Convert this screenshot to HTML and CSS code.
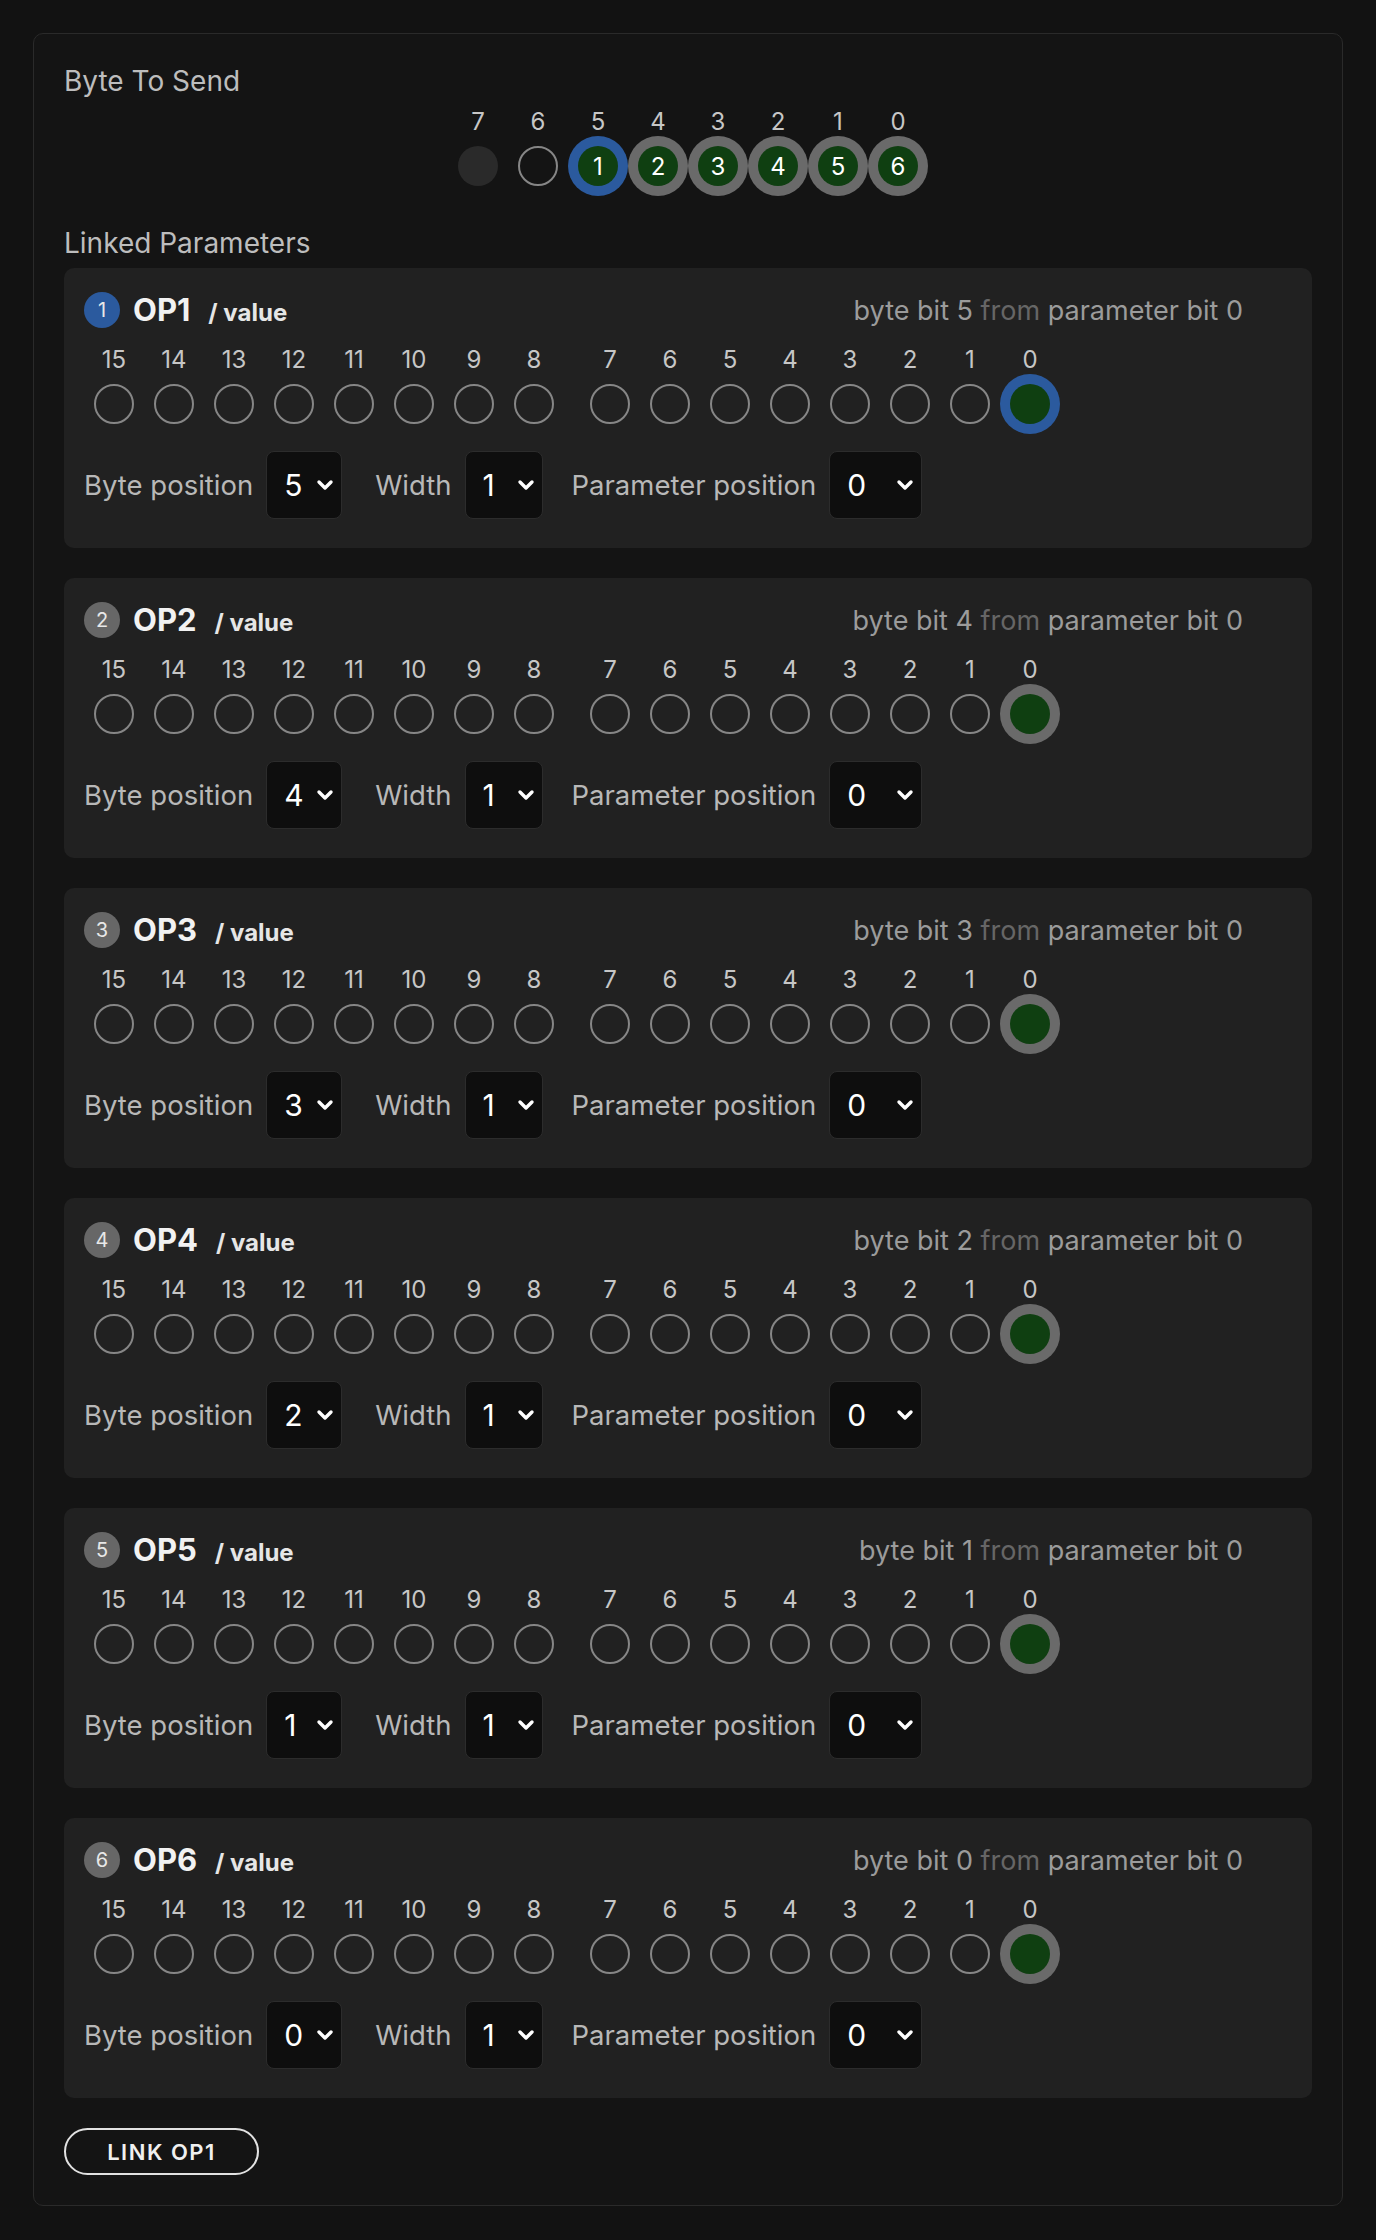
FILE: index.html
```html
<!DOCTYPE html>
<html lang="en">
<head>
<meta charset="utf-8">
<title>Byte To Send</title>
<link rel="stylesheet" href="styles.css">
</head>
<body>
<div class="page">
  <div class="card">
    <div class="heading">Byte To Send</div>
    <div class="byte-row">
      <div class="bit"><div class="bit-label">7</div><div class="dot off"></div></div>
      <div class="bit"><div class="bit-label">6</div><div class="dot"></div></div>
      <div class="bit"><div class="bit-label">5</div><div class="dot on sel">1</div></div>
      <div class="bit"><div class="bit-label">4</div><div class="dot on">2</div></div>
      <div class="bit"><div class="bit-label">3</div><div class="dot on">3</div></div>
      <div class="bit"><div class="bit-label">2</div><div class="dot on">4</div></div>
      <div class="bit"><div class="bit-label">1</div><div class="dot on">5</div></div>
      <div class="bit"><div class="bit-label">0</div><div class="dot on">6</div></div>
    </div>

    <div class="heading heading-linked">Linked Parameters</div>

    <div class="panels">

      <!-- OP1 -->
      <div class="panel">
        <div class="panel-head">
          <span class="badge badge-sel">1</span>
          <span class="title"><span class="op">OP1</span><span class="sub">/ value</span></span>
          <span class="mapping">byte bit 5 <span class="from">from</span> parameter bit 0</span>
        </div>
        <div class="bits">
          <div class="group">
            <div class="bit"><div class="bit-label">15</div><div class="dot"></div></div>
            <div class="bit"><div class="bit-label">14</div><div class="dot"></div></div>
            <div class="bit"><div class="bit-label">13</div><div class="dot"></div></div>
            <div class="bit"><div class="bit-label">12</div><div class="dot"></div></div>
            <div class="bit"><div class="bit-label">11</div><div class="dot"></div></div>
            <div class="bit"><div class="bit-label">10</div><div class="dot"></div></div>
            <div class="bit"><div class="bit-label">9</div><div class="dot"></div></div>
            <div class="bit"><div class="bit-label">8</div><div class="dot"></div></div>
          </div>
          <div class="group">
            <div class="bit"><div class="bit-label">7</div><div class="dot"></div></div>
            <div class="bit"><div class="bit-label">6</div><div class="dot"></div></div>
            <div class="bit"><div class="bit-label">5</div><div class="dot"></div></div>
            <div class="bit"><div class="bit-label">4</div><div class="dot"></div></div>
            <div class="bit"><div class="bit-label">3</div><div class="dot"></div></div>
            <div class="bit"><div class="bit-label">2</div><div class="dot"></div></div>
            <div class="bit"><div class="bit-label">1</div><div class="dot"></div></div>
            <div class="bit"><div class="bit-label">0</div><div class="dot on sel"></div></div>
          </div>
        </div>
        <div class="controls">
          <span class="ctl-label">Byte position</span>
          <div class="select sel-byte"><span class="val">5</span><svg class="chev" width="18" height="12" viewBox="0 0 18 12"><path d="M3 3 L9 9 L15 3" fill="none" stroke="#fff" stroke-width="3.4" stroke-linecap="round" stroke-linejoin="round"/></svg></div>
          <span class="ctl-label">Width</span>
          <div class="select sel-width"><span class="val">1</span><svg class="chev" width="18" height="12" viewBox="0 0 18 12"><path d="M3 3 L9 9 L15 3" fill="none" stroke="#fff" stroke-width="3.4" stroke-linecap="round" stroke-linejoin="round"/></svg></div>
          <span class="ctl-label">Parameter position</span>
          <div class="select sel-param"><span class="val">0</span><svg class="chev" width="18" height="12" viewBox="0 0 18 12"><path d="M3 3 L9 9 L15 3" fill="none" stroke="#fff" stroke-width="3.4" stroke-linecap="round" stroke-linejoin="round"/></svg></div>
        </div>
      </div>

      <!-- OP2 -->
      <div class="panel">
        <div class="panel-head">
          <span class="badge">2</span>
          <span class="title"><span class="op">OP2</span><span class="sub">/ value</span></span>
          <span class="mapping">byte bit 4 <span class="from">from</span> parameter bit 0</span>
        </div>
        <div class="bits">
          <div class="group">
            <div class="bit"><div class="bit-label">15</div><div class="dot"></div></div>
            <div class="bit"><div class="bit-label">14</div><div class="dot"></div></div>
            <div class="bit"><div class="bit-label">13</div><div class="dot"></div></div>
            <div class="bit"><div class="bit-label">12</div><div class="dot"></div></div>
            <div class="bit"><div class="bit-label">11</div><div class="dot"></div></div>
            <div class="bit"><div class="bit-label">10</div><div class="dot"></div></div>
            <div class="bit"><div class="bit-label">9</div><div class="dot"></div></div>
            <div class="bit"><div class="bit-label">8</div><div class="dot"></div></div>
          </div>
          <div class="group">
            <div class="bit"><div class="bit-label">7</div><div class="dot"></div></div>
            <div class="bit"><div class="bit-label">6</div><div class="dot"></div></div>
            <div class="bit"><div class="bit-label">5</div><div class="dot"></div></div>
            <div class="bit"><div class="bit-label">4</div><div class="dot"></div></div>
            <div class="bit"><div class="bit-label">3</div><div class="dot"></div></div>
            <div class="bit"><div class="bit-label">2</div><div class="dot"></div></div>
            <div class="bit"><div class="bit-label">1</div><div class="dot"></div></div>
            <div class="bit"><div class="bit-label">0</div><div class="dot on"></div></div>
          </div>
        </div>
        <div class="controls">
          <span class="ctl-label">Byte position</span>
          <div class="select sel-byte"><span class="val">4</span><svg class="chev" width="18" height="12" viewBox="0 0 18 12"><path d="M3 3 L9 9 L15 3" fill="none" stroke="#fff" stroke-width="3.4" stroke-linecap="round" stroke-linejoin="round"/></svg></div>
          <span class="ctl-label">Width</span>
          <div class="select sel-width"><span class="val">1</span><svg class="chev" width="18" height="12" viewBox="0 0 18 12"><path d="M3 3 L9 9 L15 3" fill="none" stroke="#fff" stroke-width="3.4" stroke-linecap="round" stroke-linejoin="round"/></svg></div>
          <span class="ctl-label">Parameter position</span>
          <div class="select sel-param"><span class="val">0</span><svg class="chev" width="18" height="12" viewBox="0 0 18 12"><path d="M3 3 L9 9 L15 3" fill="none" stroke="#fff" stroke-width="3.4" stroke-linecap="round" stroke-linejoin="round"/></svg></div>
        </div>
      </div>

      <!-- OP3 -->
      <div class="panel">
        <div class="panel-head">
          <span class="badge">3</span>
          <span class="title"><span class="op">OP3</span><span class="sub">/ value</span></span>
          <span class="mapping">byte bit 3 <span class="from">from</span> parameter bit 0</span>
        </div>
        <div class="bits">
          <div class="group">
            <div class="bit"><div class="bit-label">15</div><div class="dot"></div></div>
            <div class="bit"><div class="bit-label">14</div><div class="dot"></div></div>
            <div class="bit"><div class="bit-label">13</div><div class="dot"></div></div>
            <div class="bit"><div class="bit-label">12</div><div class="dot"></div></div>
            <div class="bit"><div class="bit-label">11</div><div class="dot"></div></div>
            <div class="bit"><div class="bit-label">10</div><div class="dot"></div></div>
            <div class="bit"><div class="bit-label">9</div><div class="dot"></div></div>
            <div class="bit"><div class="bit-label">8</div><div class="dot"></div></div>
          </div>
          <div class="group">
            <div class="bit"><div class="bit-label">7</div><div class="dot"></div></div>
            <div class="bit"><div class="bit-label">6</div><div class="dot"></div></div>
            <div class="bit"><div class="bit-label">5</div><div class="dot"></div></div>
            <div class="bit"><div class="bit-label">4</div><div class="dot"></div></div>
            <div class="bit"><div class="bit-label">3</div><div class="dot"></div></div>
            <div class="bit"><div class="bit-label">2</div><div class="dot"></div></div>
            <div class="bit"><div class="bit-label">1</div><div class="dot"></div></div>
            <div class="bit"><div class="bit-label">0</div><div class="dot on"></div></div>
          </div>
        </div>
        <div class="controls">
          <span class="ctl-label">Byte position</span>
          <div class="select sel-byte"><span class="val">3</span><svg class="chev" width="18" height="12" viewBox="0 0 18 12"><path d="M3 3 L9 9 L15 3" fill="none" stroke="#fff" stroke-width="3.4" stroke-linecap="round" stroke-linejoin="round"/></svg></div>
          <span class="ctl-label">Width</span>
          <div class="select sel-width"><span class="val">1</span><svg class="chev" width="18" height="12" viewBox="0 0 18 12"><path d="M3 3 L9 9 L15 3" fill="none" stroke="#fff" stroke-width="3.4" stroke-linecap="round" stroke-linejoin="round"/></svg></div>
          <span class="ctl-label">Parameter position</span>
          <div class="select sel-param"><span class="val">0</span><svg class="chev" width="18" height="12" viewBox="0 0 18 12"><path d="M3 3 L9 9 L15 3" fill="none" stroke="#fff" stroke-width="3.4" stroke-linecap="round" stroke-linejoin="round"/></svg></div>
        </div>
      </div>

      <!-- OP4 -->
      <div class="panel">
        <div class="panel-head">
          <span class="badge">4</span>
          <span class="title"><span class="op">OP4</span><span class="sub">/ value</span></span>
          <span class="mapping">byte bit 2 <span class="from">from</span> parameter bit 0</span>
        </div>
        <div class="bits">
          <div class="group">
            <div class="bit"><div class="bit-label">15</div><div class="dot"></div></div>
            <div class="bit"><div class="bit-label">14</div><div class="dot"></div></div>
            <div class="bit"><div class="bit-label">13</div><div class="dot"></div></div>
            <div class="bit"><div class="bit-label">12</div><div class="dot"></div></div>
            <div class="bit"><div class="bit-label">11</div><div class="dot"></div></div>
            <div class="bit"><div class="bit-label">10</div><div class="dot"></div></div>
            <div class="bit"><div class="bit-label">9</div><div class="dot"></div></div>
            <div class="bit"><div class="bit-label">8</div><div class="dot"></div></div>
          </div>
          <div class="group">
            <div class="bit"><div class="bit-label">7</div><div class="dot"></div></div>
            <div class="bit"><div class="bit-label">6</div><div class="dot"></div></div>
            <div class="bit"><div class="bit-label">5</div><div class="dot"></div></div>
            <div class="bit"><div class="bit-label">4</div><div class="dot"></div></div>
            <div class="bit"><div class="bit-label">3</div><div class="dot"></div></div>
            <div class="bit"><div class="bit-label">2</div><div class="dot"></div></div>
            <div class="bit"><div class="bit-label">1</div><div class="dot"></div></div>
            <div class="bit"><div class="bit-label">0</div><div class="dot on"></div></div>
          </div>
        </div>
        <div class="controls">
          <span class="ctl-label">Byte position</span>
          <div class="select sel-byte"><span class="val">2</span><svg class="chev" width="18" height="12" viewBox="0 0 18 12"><path d="M3 3 L9 9 L15 3" fill="none" stroke="#fff" stroke-width="3.4" stroke-linecap="round" stroke-linejoin="round"/></svg></div>
          <span class="ctl-label">Width</span>
          <div class="select sel-width"><span class="val">1</span><svg class="chev" width="18" height="12" viewBox="0 0 18 12"><path d="M3 3 L9 9 L15 3" fill="none" stroke="#fff" stroke-width="3.4" stroke-linecap="round" stroke-linejoin="round"/></svg></div>
          <span class="ctl-label">Parameter position</span>
          <div class="select sel-param"><span class="val">0</span><svg class="chev" width="18" height="12" viewBox="0 0 18 12"><path d="M3 3 L9 9 L15 3" fill="none" stroke="#fff" stroke-width="3.4" stroke-linecap="round" stroke-linejoin="round"/></svg></div>
        </div>
      </div>

      <!-- OP5 -->
      <div class="panel">
        <div class="panel-head">
          <span class="badge">5</span>
          <span class="title"><span class="op">OP5</span><span class="sub">/ value</span></span>
          <span class="mapping">byte bit 1 <span class="from">from</span> parameter bit 0</span>
        </div>
        <div class="bits">
          <div class="group">
            <div class="bit"><div class="bit-label">15</div><div class="dot"></div></div>
            <div class="bit"><div class="bit-label">14</div><div class="dot"></div></div>
            <div class="bit"><div class="bit-label">13</div><div class="dot"></div></div>
            <div class="bit"><div class="bit-label">12</div><div class="dot"></div></div>
            <div class="bit"><div class="bit-label">11</div><div class="dot"></div></div>
            <div class="bit"><div class="bit-label">10</div><div class="dot"></div></div>
            <div class="bit"><div class="bit-label">9</div><div class="dot"></div></div>
            <div class="bit"><div class="bit-label">8</div><div class="dot"></div></div>
          </div>
          <div class="group">
            <div class="bit"><div class="bit-label">7</div><div class="dot"></div></div>
            <div class="bit"><div class="bit-label">6</div><div class="dot"></div></div>
            <div class="bit"><div class="bit-label">5</div><div class="dot"></div></div>
            <div class="bit"><div class="bit-label">4</div><div class="dot"></div></div>
            <div class="bit"><div class="bit-label">3</div><div class="dot"></div></div>
            <div class="bit"><div class="bit-label">2</div><div class="dot"></div></div>
            <div class="bit"><div class="bit-label">1</div><div class="dot"></div></div>
            <div class="bit"><div class="bit-label">0</div><div class="dot on"></div></div>
          </div>
        </div>
        <div class="controls">
          <span class="ctl-label">Byte position</span>
          <div class="select sel-byte"><span class="val">1</span><svg class="chev" width="18" height="12" viewBox="0 0 18 12"><path d="M3 3 L9 9 L15 3" fill="none" stroke="#fff" stroke-width="3.4" stroke-linecap="round" stroke-linejoin="round"/></svg></div>
          <span class="ctl-label">Width</span>
          <div class="select sel-width"><span class="val">1</span><svg class="chev" width="18" height="12" viewBox="0 0 18 12"><path d="M3 3 L9 9 L15 3" fill="none" stroke="#fff" stroke-width="3.4" stroke-linecap="round" stroke-linejoin="round"/></svg></div>
          <span class="ctl-label">Parameter position</span>
          <div class="select sel-param"><span class="val">0</span><svg class="chev" width="18" height="12" viewBox="0 0 18 12"><path d="M3 3 L9 9 L15 3" fill="none" stroke="#fff" stroke-width="3.4" stroke-linecap="round" stroke-linejoin="round"/></svg></div>
        </div>
      </div>

      <!-- OP6 -->
      <div class="panel">
        <div class="panel-head">
          <span class="badge">6</span>
          <span class="title"><span class="op">OP6</span><span class="sub">/ value</span></span>
          <span class="mapping">byte bit 0 <span class="from">from</span> parameter bit 0</span>
        </div>
        <div class="bits">
          <div class="group">
            <div class="bit"><div class="bit-label">15</div><div class="dot"></div></div>
            <div class="bit"><div class="bit-label">14</div><div class="dot"></div></div>
            <div class="bit"><div class="bit-label">13</div><div class="dot"></div></div>
            <div class="bit"><div class="bit-label">12</div><div class="dot"></div></div>
            <div class="bit"><div class="bit-label">11</div><div class="dot"></div></div>
            <div class="bit"><div class="bit-label">10</div><div class="dot"></div></div>
            <div class="bit"><div class="bit-label">9</div><div class="dot"></div></div>
            <div class="bit"><div class="bit-label">8</div><div class="dot"></div></div>
          </div>
          <div class="group">
            <div class="bit"><div class="bit-label">7</div><div class="dot"></div></div>
            <div class="bit"><div class="bit-label">6</div><div class="dot"></div></div>
            <div class="bit"><div class="bit-label">5</div><div class="dot"></div></div>
            <div class="bit"><div class="bit-label">4</div><div class="dot"></div></div>
            <div class="bit"><div class="bit-label">3</div><div class="dot"></div></div>
            <div class="bit"><div class="bit-label">2</div><div class="dot"></div></div>
            <div class="bit"><div class="bit-label">1</div><div class="dot"></div></div>
            <div class="bit"><div class="bit-label">0</div><div class="dot on"></div></div>
          </div>
        </div>
        <div class="controls">
          <span class="ctl-label">Byte position</span>
          <div class="select sel-byte"><span class="val">0</span><svg class="chev" width="18" height="12" viewBox="0 0 18 12"><path d="M3 3 L9 9 L15 3" fill="none" stroke="#fff" stroke-width="3.4" stroke-linecap="round" stroke-linejoin="round"/></svg></div>
          <span class="ctl-label">Width</span>
          <div class="select sel-width"><span class="val">1</span><svg class="chev" width="18" height="12" viewBox="0 0 18 12"><path d="M3 3 L9 9 L15 3" fill="none" stroke="#fff" stroke-width="3.4" stroke-linecap="round" stroke-linejoin="round"/></svg></div>
          <span class="ctl-label">Parameter position</span>
          <div class="select sel-param"><span class="val">0</span><svg class="chev" width="18" height="12" viewBox="0 0 18 12"><path d="M3 3 L9 9 L15 3" fill="none" stroke="#fff" stroke-width="3.4" stroke-linecap="round" stroke-linejoin="round"/></svg></div>
        </div>
      </div>

    </div>

    <button class="link-btn" type="button">LINK OP1</button>
  </div>
</div>
</body>
</html>
```

FILE: styles.css
```css
html, body {
  margin: 0;
  padding: 0;
  background: #121212;
}

body {
  font-family: Inter, "Noto Sans", "Liberation Sans", sans-serif;
  color: #c4c4c4;
}

.page {
  padding: 33px;
}

.card {
  background: #141414;
  border: 1px solid #2a2a2a;
  border-radius: 10px;
  padding: 30px;
}

.heading {
  font-size: 28px;
  line-height: 34px;
  color: #bdbdbd;
}

.heading-linked {
  margin-top: 40px;
  margin-bottom: 8px;
}

.byte-row {
  display: flex;
  justify-content: center;
  margin-top: 10px;
}

.bit {
  width: 60px;
  display: flex;
  flex-direction: column;
  align-items: center;
}

.bit-label {
  height: 28px;
  line-height: 28px;
  font-size: 24px;
  color: #c6c6c6;
}

.dot {
  margin-top: 10px;
  width: 40px;
  height: 40px;
  box-sizing: border-box;
  border-radius: 50%;
  border: 2px solid #868686;
  display: flex;
  align-items: center;
  justify-content: center;
  font-size: 24px;
  color: #ffffff;
}

.dot.off {
  border: none;
  background: #2a2a2a;
}

.dot.on {
  border: none;
  background: #0f3f11;
  box-shadow: 0 0 0 10px #6a6a6a;
}

.dot.on.sel {
  box-shadow: 0 0 0 10px #2b5a9e;
}

.panels {
  display: flex;
  flex-direction: column;
  gap: 30px;
}

.panel {
  background: #212121;
  border-radius: 10px;
  padding: 20px 20px 29px;
}

.panel-head {
  height: 44px;
  display: flex;
  align-items: center;
}

.badge {
  width: 36px;
  height: 36px;
  border-radius: 50%;
  background: #676767;
  color: #e8e8e8;
  font-size: 20px;
  display: flex;
  align-items: center;
  justify-content: center;
  flex: none;
}

.badge.badge-sel {
  background: #2b5a9e;
}

.title {
  margin-left: 13px;
  font-weight: 700;
  white-space: nowrap;
  position: relative;
  top: -1px;
}

.op {
  font-size: 31px;
  color: #f2f2f2;
}

.sub {
  margin-left: 18px;
  font-size: 24px;
  color: #e6e6e6;
}

.mapping {
  margin-left: auto;
  margin-right: 49px;
  font-size: 27px;
  color: #9b9b9b;
  white-space: nowrap;
}

.from {
  color: #666666;
}

.bits {
  margin-top: 14px;
  display: flex;
  gap: 16px;
}

.group {
  display: flex;
}

.controls {
  margin-top: 27px;
  display: flex;
  align-items: center;
}

.ctl-label {
  font-size: 27.5px;
  color: #b8b8b8;
  margin-right: 13px;
  white-space: nowrap;
}

.select {
  height: 68px;
  box-sizing: border-box;
  border: 1px solid #2c2c2c;
  border-radius: 8px;
  background: #0e0e0e;
  display: flex;
  align-items: center;
  padding: 0 7px 0 17px;
  flex: none;
}

.select .val {
  font-size: 30px;
  color: #ffffff;
}

.select .chev {
  margin-left: auto;
  display: block;
}

.sel-byte {
  width: 76px;
  margin-right: 33px;
}

.sel-width {
  width: 78px;
  margin-right: 29px;
}

.sel-param {
  width: 93px;
}

.link-btn {
  margin-top: 30px;
  width: 195px;
  height: 47px;
  box-sizing: border-box;
  border: 2px solid #e2e2e2;
  border-radius: 24px;
  background: transparent;
  color: #f0f0f0;
  font-family: Inter, "Noto Sans", "Liberation Sans", sans-serif;
  font-size: 22px;
  font-weight: 600;
  letter-spacing: 1.5px;
  padding: 0;
  display: block;
}
```
